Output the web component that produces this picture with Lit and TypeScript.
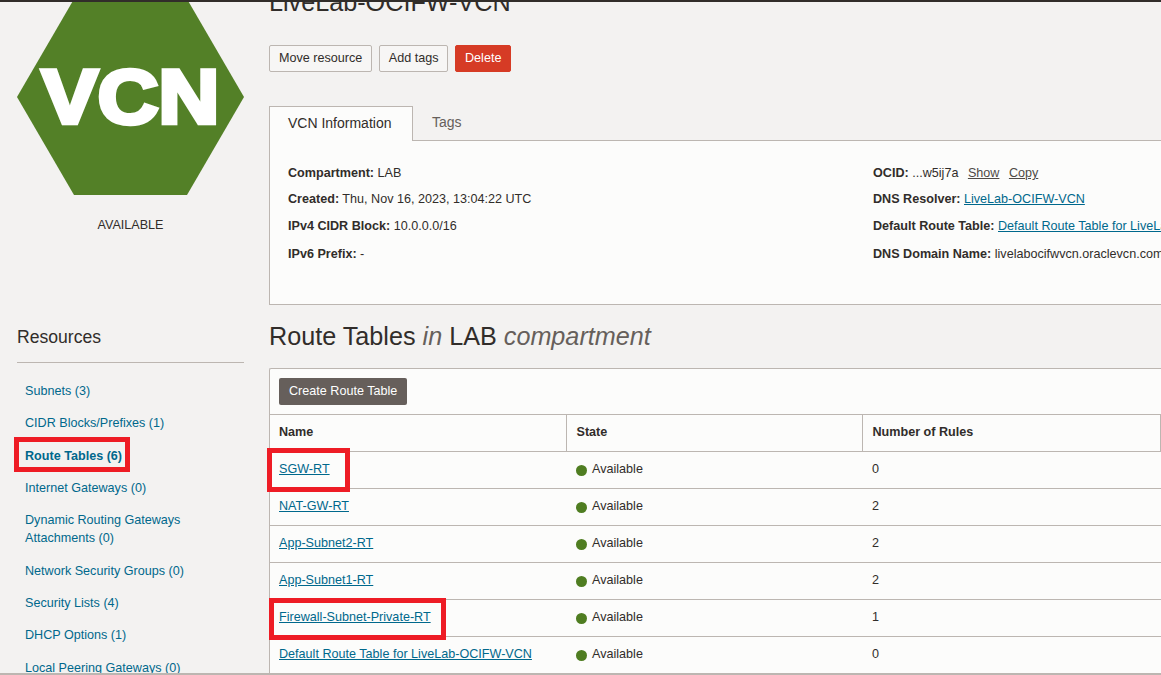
import { LitElement, html, css } from "lit";
import { customElement } from "lit/decorators.js";

const resources = [
  ["Subnets (3)"],
  ["CIDR Blocks/Prefixes (1)"],
  ["Route Tables (6)", "active"],
  ["Internet Gateways (0)"],
  ["Dynamic Routing Gateways Attachments (0)"],
  ["Network Security Groups (0)"],
  ["Security Lists (4)"],
  ["DHCP Options (1)"],
  ["Local Peering Gateways (0)"],
];
const rows = [
  ["SGW-RT", "0"],
  ["NAT-GW-RT", "2"],
  ["App-Subnet2-RT", "2"],
  ["App-Subnet1-RT", "2"],
  ["Firewall-Subnet-Private-RT", "1"],
  ["Default Route Table for LiveLab-OCIFW-VCN", "0"],
];

@customElement("app-root")
export class AppRoot extends LitElement {
  static styles = css`
    :host {
      display: block; position: relative; width: 1161px; height: 675px; overflow: hidden;
      background: #f3f2f1; color: #312d2a;
      font-family: "Liberation Sans", Arial, sans-serif; font-size: 12.6px;
    }
    * { box-sizing: border-box; }
    a { color: #00688c; }
    .topbar { height: 2px; background: #312d2a; position: relative; z-index: 2; }
    .page { display: grid; grid-template-columns: 227px 892px; column-gap: 25px; padding-left: 17px; height: 673px; overflow: hidden; }
    .hex { display: block; width: 227px; height: 196px; margin-top: -3px; }
    .hex text { font: bold 76px "Liberation Sans", Arial, sans-serif; fill: #fff; stroke: #fff; stroke-width: 4.5px; }
    .avail { text-align: center; margin-top: 22px; line-height: 16px; }
    .res-title { font-size: 17.6px; line-height: 24px; margin-top: 92px; padding-bottom: 13px; border-bottom: 1px solid #bcb6b1; }
    .res { list-style: none; margin: 0; padding: 19px 0 0 8px; line-height: 18px; width: 175px; }
    .res li { padding-bottom: 14.33px; }
    .res a { text-decoration: none; }
    .res .active { font-weight: bold; }
    .title { font-size: 25.2px; line-height: 30px; font-weight: normal; margin: -15px 0 0; }
    .actions { display: flex; gap: 7px; margin-top: 28px; }
    .btn { height: 27px; padding: 0 9px 1px; border: 1px solid #bcb6b1; border-radius: 2px; background: #f7f6f5; display: flex; align-items: center; line-height: 1; }
    .btn.tags { padding: 0 8.5px 1px; }
    .btn.del { background: #d63b25; border-color: #d63b25; color: #fff; }
    .tabs { display: flex; margin-top: 34px; height: 35px; border-bottom: 1px solid #bcb6b1; font-size: 14px; }
    .tab { width: 144px; height: 35px; padding: 8px 0 0 18px; background: #fcfcfb; border: 1px solid #bcb6b1; border-bottom: 0; }
    .tab2 { padding: 8px 0 0 19px; color: #665f5b; }
    .info { height: 164px; border-left: 1px solid #bcb6b1; border-bottom: 1px solid #bcb6b1; background: #fcfcfb; display: grid; grid-template-columns: 585px 1fr; padding: 23px 0 0 18px; line-height: 18px; white-space: nowrap; }
    .info p { margin: 0; height: 27px; overflow: hidden; }
    .info p:first-child { height: 26px; }
    .info p:nth-child(3) { height: 28px; }
    .info .last { height: auto; }
    .info b { font-weight: bold; }
    .plain { color: #4f4a46; margin-left: 6px; }
    .section { font-size: 25.2px; line-height: 30px; font-weight: normal; margin: 16px 0 0; }
    .section em { color: #665f5b; }
    .card { margin-top: 17px; background: #fcfcfb; border: 1px solid #bcb6b1; border-right: 0; border-radius: 2px 0 0 0; }
    .bar { height: 45px; padding: 9px; }
    .create { display: inline-flex; align-items: center; height: 27px; padding: 0 10px 2px; background: #665f5b; color: #fff; border-radius: 2px; }
    table { border-collapse: collapse; table-layout: fixed; width: 891px; }
    th, td { height: 37px; padding: 0 9px 2px; text-align: left; border-top: 1px solid #bcb6b1; border-bottom: 1px solid #bcb6b1; }
    th { font-weight: bold; border-right: 1px solid #bcb6b1; }
    th:not(:first-child), td:not(:first-child) { padding-left: 10px; }
    .state { display: flex; align-items: center; gap: 5px; }
    .dot { width: 11px; height: 11px; border-radius: 50%; background: #4f7d21; position: relative; top: 1px; }
    .mark { position: absolute; border: 5px solid #ee1c25; z-index: 3; pointer-events: none; }
    .m1 { left: 14px; top: 437px; width: 116px; height: 35px; }
    .m2 { left: 267px; top: 448px; width: 83px; height: 44px; }
    .m3 { left: 269px; top: 598px; width: 177px; height: 42px; }
    .foot { position: absolute; left: 0; right: 0; top: 673px; height: 2px; background: #bcb6b1; }
  `;

  render() {
    return html`
      <div class="topbar"></div>
      <div class="page">
        <aside>
          <svg class="hex" viewBox="0 0 227 196" role="img" aria-label="VCN">
            <polygon points="0,98 57,0 170,0 227,98 170,196 57,196" fill="#538027"></polygon>
            <text x="113.5" y="124" text-anchor="middle" textLength="177.5" lengthAdjust="spacingAndGlyphs">VCN</text>
          </svg>
          <div class="avail">AVAILABLE</div>
          <div class="res-title">Resources</div>
          <ul class="res">
            ${resources.map(([t, c]) => html`<li><a href="#" class=${c ?? ""}>${t}</a></li>`)}
          </ul>
        </aside>
        <main>
          <h1 class="title">LiveLab-OCIFW-VCN</h1>
          <div class="actions">
            <div class="btn">Move resource</div>
            <div class="btn tags">Add tags</div>
            <div class="btn del">Delete</div>
          </div>
          <div class="tabs">
            <div class="tab">VCN Information</div>
            <div class="tab2">Tags</div>
          </div>
          <div class="info">
            <div>
              <p><b>Compartment:</b> LAB</p>
              <p><b>Created:</b> Thu, Nov 16, 2023, 13:04:22 UTC</p>
              <p><b>IPv4 CIDR Block:</b> 10.0.0.0/16</p>
              <p class="last"><b>IPv6 Prefix:</b> -</p>
            </div>
            <div>
              <p><b>OCID:</b> ...w5ij7a <a href="#" class="plain">Show</a> <a href="#" class="plain">Copy</a></p>
              <p><b>DNS Resolver:</b> <a href="#">LiveLab-OCIFW-VCN</a></p>
              <p><b>Default Route Table:</b> <a href="#">Default Route Table for LiveLab-OCIFW-VCN</a></p>
              <p class="last"><b>DNS Domain Name:</b> livelabocifwvcn.oraclevcn.com</p>
            </div>
          </div>
          <h2 class="section">Route Tables <em>in</em> LAB <em>compartment</em></h2>
          <div class="card">
            <div class="bar"><div class="create">Create Route Table</div></div>
            <table>
              <colgroup><col style="width:296px" /><col style="width:296px" /><col /></colgroup>
              <thead><tr><th>Name</th><th>State</th><th>Number of Rules</th></tr></thead>
              <tbody>
                ${rows.map(([n, c]) => html`<tr>
                  <td><a href="#">${n}</a></td>
                  <td><div class="state"><span class="dot"></span>Available</div></td>
                  <td>${c}</td>
                </tr>`)}
              </tbody>
            </table>
          </div>
        </main>
      </div>
      <div class="foot"></div>
      <div class="mark m1"></div>
      <div class="mark m2"></div>
      <div class="mark m3"></div>
    `;
  }
}
